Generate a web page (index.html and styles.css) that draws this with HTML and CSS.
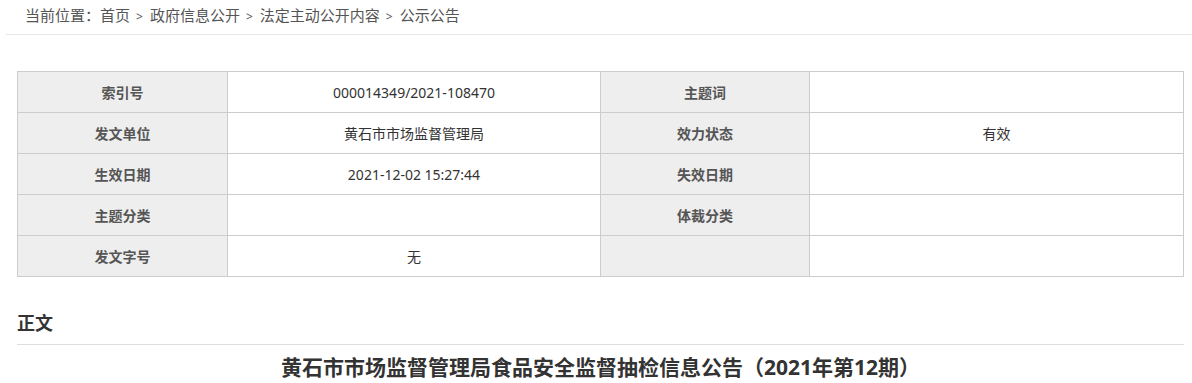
FILE: index.html
```html
<!DOCTYPE html>
<html lang="zh-CN">
<head>
    <meta charset="UTF-8">
    <title>公示公告</title>
    <link rel="stylesheet" href="styles.css">
</head>
<body>
    <div class="crumb">
        当前位置：<a href="#">首页</a><span class="sep">&gt;</span><a href="#">政府信息公开</a><span class="sep">&gt;</span><a href="#">法定主动公开内容</a><span class="sep">&gt;</span><a href="#">公示公告</a>
    </div>

    <div class="content">
        <table class="info">
            <colgroup>
                <col class="c1"><col class="c2"><col class="c3"><col class="c4">
            </colgroup>
            <tr>
                <th>索引号</th><td>000014349/2021-108470</td>
                <th>主题词</th><td></td>
            </tr>
            <tr>
                <th>发文单位</th><td>黄石市市场监督管理局</td>
                <th>效力状态</th><td>有效</td>
            </tr>
            <tr>
                <th>生效日期</th><td>2021-12-02 15:27:44</td>
                <th>失效日期</th><td></td>
            </tr>
            <tr>
                <th>主题分类</th><td></td>
                <th>体裁分类</th><td></td>
            </tr>
            <tr>
                <th>发文字号</th><td>无</td>
                <th></th><td></td>
            </tr>
        </table>

        <h3 class="body-title">正文</h3>
        <h1 class="doc-title">黄石市市场监督管理局食品安全监督抽检信息公告（2021年第12期）</h1>
    </div>
</body>
</html>
```

FILE: styles.css
```css
body {
    margin: 0;
    font-family: "Noto Sans", "Noto Sans CJK SC", sans-serif;
    font-size: 14px;
    color: #333;
    background: #fff;
}
a {
    color: inherit;
    text-decoration: none;
}
.crumb {
    margin-left: 6px;
    padding-left: 19px;
    height: 34px;
    line-height: 31px;
    border-bottom: 1px solid #e6e6e6;
    color: #555;
    font-size: 15px;
}
.crumb .sep {
    margin: 0 7px 0 6px;
    font-size: 12px;
}
.content {
    padding: 0 8px 0 17px;
}
.info {
    margin-top: 36px;
    width: 100%;
    border-collapse: collapse;
    table-layout: fixed;
}
.info .c1 { width: 210px; }
.info .c2 { width: 373px; }
.info .c3 { width: 209px; }
.info th,
.info td {
    height: 40px;
    padding: 0;
    border: 1px solid #ccc;
    text-align: center;
    font-size: 14px;
}
.info th {
    background: #eee;
    color: #555;
    font-weight: bold;
}
.info td {
    color: #333;
}
.body-title {
    margin: 0;
    padding: 33px 0 8px;
    font-size: 18px;
    line-height: 26px;
    border-bottom: 1px solid #ddd;
    color: #333;
}
.doc-title {
    margin: 0;
    padding-top: 8px;
    font-size: 21px;
    line-height: 28px;
    text-align: center;
    color: #333;
}
```
